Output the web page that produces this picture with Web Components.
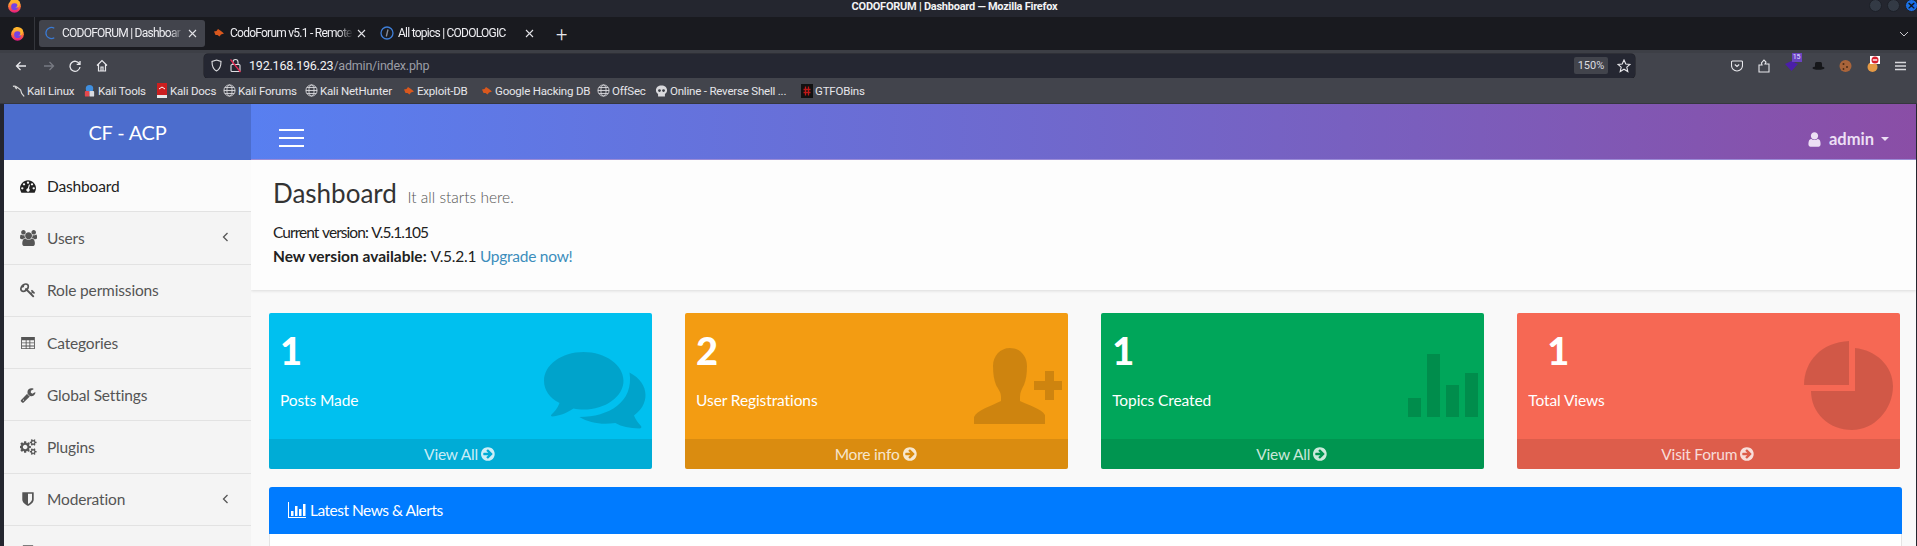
<!DOCTYPE html>
<html>
<head>
<meta charset="utf-8">
<title>CODOFORUM | Dashboard</title>
<style>
  html, body { margin: 0; height: 546px; overflow: hidden; background: #24262f; }
  body { display: flex; flex-direction: column; font-family: "Lato", "Liberation Sans", sans-serif; }
</style>
</head>
<body>
<ff-titlebar></ff-titlebar>
<ff-tabstrip>
  <ff-tab active label="CODOFORUM | Dashboar" icon="spin"></ff-tab>
  <ff-tab label="CodoForum v5.1 - Remote" icon="bug"></ff-tab>
  <ff-tab label="All topics | CODOLOGIC" icon="info"></ff-tab>
</ff-tabstrip>
<ff-toolbar></ff-toolbar>
<ff-bookmarks>
  <ff-bookmark icon="dragon" style="--w:56px">Kali Linux</ff-bookmark>
  <ff-bookmark icon="tools" style="--w:57px">Kali Tools</ff-bookmark>
  <ff-bookmark icon="docs" style="--w:53px">Kali Docs</ff-bookmark>
  <ff-bookmark icon="globe" style="--w:67px">Kali Forums</ff-bookmark>
  <ff-bookmark icon="globe" style="--w:82px">Kali NetHunter</ff-bookmark>
  <ff-bookmark icon="bug" style="--w:63px">Exploit-DB</ff-bookmark>
  <ff-bookmark icon="bug" style="--w:102px">Google Hacking DB</ff-bookmark>
  <ff-bookmark icon="globe" style="--w:43px">OffSec</ff-bookmark>
  <ff-bookmark icon="skull" style="--w:130px">Online - Reverse Shell ...</ff-bookmark>
  <ff-bookmark icon="gtfo" style="--w:60px">GTFOBins</ff-bookmark>
</ff-bookmarks>
<acp-page>
  <acp-sidebar slot="side">
    <acp-nav-item active icon="dashboard">Dashboard</acp-nav-item>
    <acp-nav-item icon="users" more>Users</acp-nav-item>
    <acp-nav-item icon="key">Role permissions</acp-nav-item>
    <acp-nav-item icon="table">Categories</acp-nav-item>
    <acp-nav-item icon="wrench">Global Settings</acp-nav-item>
    <acp-nav-item icon="cogs">Plugins</acp-nav-item>
    <acp-nav-item icon="shield" more>Moderation</acp-nav-item>
    <acp-nav-item icon="page"></acp-nav-item>
  </acp-sidebar>
  <acp-topbar slot="top"></acp-topbar>
  <acp-page-header></acp-page-header>
  <acp-stats>
    <acp-card value="1" label="Posts Made" link="View All" icon="chat" style="--bg:#00c0ef"></acp-card>
    <acp-card value="2" label="User Registrations" link="More info" icon="person" style="--bg:#f39c12"></acp-card>
    <acp-card value="1" label="Topics Created" link="View All" icon="bars" style="--bg:#00a65a"></acp-card>
    <acp-card value="1" label="Total Views" link="Visit Forum" icon="pie" indent style="--bg:#f66854"></acp-card>
  </acp-stats>
  <acp-panel>Latest News &amp; Alerts</acp-panel>
</acp-page>

<script>
// font-awesome 4 glyphs, 1792 box unless WIDE says otherwise
const WIDE = { users: 1920, cogs: 1920 };
const FA = {
  user: 'M1536 1399q0 109-62.500 187t-150.500 78h-854q-88 0-150.500-78t-62.500-187q0-85 8.500-160.500t31.500-152 58.500-131 94-89 134.500-34.500q131 128 313 128t313-128q76 0 134.500 34.500t94 89 58.500 131 31.500 152 8.500 160.500zm-256-887q0 159-112.500 271.500t-271.500 112.500-271.500-112.500-112.500-271.500 112.500-271.500 271.500-112.500 271.500 112.500 112.500 271.500z',
  users: 'M593 896q-162 5-265 128h-134q-82 0-138-40.500t-56-118.500q0-353 124-353 6 0 43.500 21t97.500 42.500 119 21.500q67 0 133-23-5 37-5 66 0 139 81 256zm1071 637q0 120-73 189.500t-194 69.500h-874q-121 0-194-69.500t-73-189.500q0-53 3.500-103.500t14-109 26.500-108.500 43-97.500 62-81 85.500-53.500 111.500-20q10 0 43 21.500t73 48 107 48 135 21.500 135-21.500 107-48 73-48 43-21.500q61 0 111.500 20t85.500 53.500 62 81 43 97.500 26.500 108.500 14 109 3.500 103.500zm-1024-1277q0 106-75 181t-181 75-181-75-75-181 75-181 181-75 181 75 75 181zm704 384q0 159-112.500 271.500t-271.500 112.500-271.500-112.500-112.500-271.500 112.500-271.500 271.500-112.500 271.500 112.500 112.500 271.500zm576 225q0 78-56 118.500t-138 40.500h-134q-103-123-265-128 81-117 81-256 0-29-5-66 66 23 133 23 59 0 119-21.500t97.500-42.500 43.500-21q124 0 124 353zm-128-609q0 106-75 181t-181 75-181-75-75-181 75-181 181-75 181 75 75 181z',
  wrench: 'M448 1472q0-26-19-45t-45-19-45 19-19 45 19 45 45 19 45-19 19-45zm644-420l-682 682q-37 37-90 37-52 0-91-37l-106-108q-38-36-38-90 0-53 38-91l681-681q39 98 114.500 173.500t173.500 114.500zm634-435q0 39-23 106-47 134-164.500 217.500t-258.500 83.500q-185 0-316.500-131.500t-131.500-316.500 131.500-316.500 316.500-131.500q58 0 121.500 16.500t107.500 46.500q16 11 16 28t-16 28l-293 169v224l193 107q5-3 79-48.500t135.500-81 70.500-35.500q15 0 23.500 10t8.500 25z',
  shield: 'M1344 960v-640h-448v1137q119-63 213-137 235-184 235-360zm192-768v768q0 86-33.500 170.500t-83 150-118 127.500-126.500 103-121 77.500-89.500 49.500-42.500 20q-12 6-26 6t-26-6q-16-7-42.500-20t-89.500-49.500-121-77.500-126.500-103-118-127.500-83-150-33.500-170.500v-768q0-26 19-45t45-19h1152q26 0 45 19t19 45z',
  arrow: 'M1285 896q0-27-18-45l-91-91-362-362q-18-18-45-18t-45 18l-91 91q-18 18-18 45t18 45l189 189h-502q-26 0-45 19t-19 45v128q0 26 19 45t45 19h502l-189 189q-19 19-19 45t19 45l91 91q18 18 45 18t45-18l362-362 91-91q18-18 18-45zm251 0q0 209-103 385.500t-279.500 279.500-385.500 103-385.500-103-279.500-279.500-103-385.500 103-385.500 279.500-279.500 385.500-103 385.500 103 279.500 279.500 103 385.500z',
  table: 'M128 224h1536v1344h-1536zM224 576v256h416v-256zM736 576v256h320v-256zM1152 576v256h416v-256zM224 928v256h416v-256zM736 928v256h320v-256zM1152 928v256h416v-256zM224 1280v192h416v-192zM736 1280v192h320v-192zM1152 1280v192h416v-192z',
  key: 'M832 512q0-80-56-136t-136-56-136 56-56 136q0 42 19 83-41-19-83-19-80 0-136 56t-56 136 56 136 136 56 136-56 56-136q0-42-19-83 41 19 83 19 80 0 136-56t56-136zm851 704q0 17-49 66t-66 49q-9 0-28.500-16t-36.500-33-38.500-40-24.500-26l-96 96 220 220q28 28 28 68 0 42-39 81t-81 39q-40 0-68-28l-671-671q-176 131-365 131-163 0-265.500-102.500t-102.500-265.500q0-160 95-313t248-248 313-95q163 0 265.500 102.500t102.500 265.500q0 189-131 365l355 355 96-96q-3-3-26-24.500t-40-38.500-33-36.500-16-28.500q0-17 49-66t66-49q13 0 23 10 6 6 46 44.500t82 79.500 86.500 86 73 78 28.500 41z',
  dashboard: 'M384 1152q0-53-37.500-90.500t-90.500-37.500-90.500 37.500-37.500 90.500 37.500 90.500 90.500 37.500 90.500-37.500 37.500-90.500zm192-448q0-53-37.500-90.500t-90.500-37.500-90.500 37.500-37.500 90.500 37.500 90.500 90.500 37.500 90.500-37.500 37.500-90.500zm428 481l101-382q6-26-7.500-48.500t-38.500-29.500-48 6.500-30 39.500l-101 382q-60 5-107 43.500t-63 98.500q-20 77 20 146t117 89 146-20 89-117q16-60-6-117t-72-91zm660-33q0-53-37.500-90.500t-90.500-37.500-90.500 37.500-37.500 90.500 37.500 90.500 90.500 37.500 90.500-37.500 37.500-90.500zm-640-640q0-53-37.500-90.500t-90.500-37.500-90.500 37.500-37.500 90.500 37.500 90.500 90.500 37.500 90.500-37.500 37.500-90.500zm448 192q0-53-37.500-90.500t-90.500-37.500-90.500 37.500-37.500 90.500 37.500 90.500 90.500 37.500 90.500-37.500 37.500-90.500zm320 448q0 261-141 483-19 29-54 29h-1402q-35 0-54-29-141-221-141-483 0-182 71-348t191-286 286-191 348-71 348 71 286 191 191 286 71 348z',
  cogs: 'M832 896q0-106-75-181t-181-75-181 75-75 181 75 181 181 75 181-75 75-181zm768 512q0-52-38-90t-90-38-90 38-38 90q0 53 37.500 90.500t90.500 37.500 90.500-37.500 37.500-90.500zm0-1024q0-52-38-90t-90-38-90 38-38 90q0 53 37.500 90.500t90.500 37.500 90.500-37.500 37.500-90.500zm-384 421v185q0 10-7 19.500t-16 10.500l-155 24q-11 35-32 76 34 48 90 115 7 11 7 20 0 12-7 19-23 30-82.500 89.500t-78.500 59.500q-11 0-21-7l-115-90q-37 19-77 31-11 108-23 155-7 24-30 24h-186q-11 0-20-7.500t-10-17.500l-23-153q-34-10-75-31l-118 89q-7 7-20 7-11 0-21-8-144-133-144-160 0-9 7-19 10-14 41-53t47-61q-23-44-35-82l-152-24q-10-1-17-9.500t-7-19.500v-185q0-10 7-19.500t16-10.500l155-24q11-35 32-76-34-48-90-115-7-11-7-20 0-12 7-20 22-30 82-89t79-59q11 0 21 7l115 90q34-18 77-32 11-108 23-154 7-24 30-24h186q11 0 20 7.500t10 17.500l23 153q34 10 75 31l118-89q8-7 20-7 11 0 21 8 144 133 144 160 0 8-7 19-12 16-42 54t-45 60q23 48 34 82l152 23q10 2 17 10.500t7 19.500zm640 533v140q0 16-149 31-12 27-30 52 51 113 51 138 0 4-4 7-122 71-124 71-8 0-46-47t-52-68q-20 2-30 2t-30-2q-14 21-52 68t-46 47q-2 0-124-71-4-3-4-7 0-25 51-138-18-25-30-52-149-15-149-31v-140q0-16 149-31 13-29 30-52-51-113-51-138 0-4 4-7 4-2 35-20t59-34 30-16q8 0 46 46.500t52 67.500q20-2 30-2t30 2q51-71 92-112l6-2q4 0 124 70 4 3 4 7 0 25-51 138 17 23 30 52 149 15 149 31zm0-1024v140q0 16-149 31-12 27-30 52 51 113 51 138 0 4-4 7-122 71-124 71-8 0-46-47t-52-68q-20 2-30 2t-30-2q-14 21-52 68t-46 47q-2 0-124-71-4-3-4-7 0-25 51-138-18-25-30-52-149-15-149-31v-140q0-16 149-31 13-29 30-52-51-113-51-138 0-4 4-7 4-2 35-20t59-34 30-16q8 0 46 46.500t52 67.500q20-2 30-2t30 2q51-71 92-112l6-2q4 0 124 70 4 3 4 7 0 25-51 138 17 23 30 52 149 15 149 31z',
  page: 'M320 128h1152v1536h-1152zM448 256v1280h896v-1280z'
};

function fa(name, size, rule = 'evenodd') {
  const w = WIDE[name] || 1792;
  return `<svg width="${size * w / 1792}" height="${size}" viewBox="0 0 ${w} 1792" fill="currentColor" fill-rule="${rule}"><path d="${FA[name]}"/></svg>`;
}

const FOX = `<svg width="15" height="15" viewBox="0 0 20 20"><defs><linearGradient id="f" x1="0" y1="0" x2="0" y2="1"><stop offset="0" stop-color="#ffd23a"/><stop offset=".55" stop-color="#ff7139"/><stop offset="1" stop-color="#e31587"/></linearGradient></defs><circle cx="10" cy="11" r="8.500" fill="url(#f)"/><circle cx="10" cy="11.500" r="4.500" fill="#7542e5"/><path d="M4 4c2 3 7 1 9 3 2 2 1 5-2 6 5 0 7-4 6-8-3-4-9-5-13-1z" fill="#ffb32c"/></svg>`;

const FAVICONS = {
  spin: `<svg width="13" height="14" viewBox="0 0 14 14" fill="none"><path d="M10 1.800A6 6 0 1 0 10 12.200" stroke="#3a7bd5" stroke-width="1.300"/></svg>`,
  info: `<svg width="14" height="14" viewBox="0 0 14 14" fill="none"><circle cx="7" cy="7" r="6" stroke="#3f7fd8" stroke-width="1.300"/><path d="M8 3.500 6.300 10.500" stroke="#8a8f99" stroke-width="1.300"/></svg>`,
  bug: `<svg width="12" height="12" viewBox="0 0 12 12"><path d="M1 4.500 3.500 4 5 2l3 2 3 2.500-3 1-1.500 2L4.500 8 2.500 8z" fill="#d9581e"/></svg>`,
  globe: `<svg width="13" height="13" viewBox="0 0 14 14" fill="none" stroke="#d6d6da" stroke-width="1"><circle cx="7" cy="7" r="6"/><ellipse cx="7" cy="7" rx="2.800" ry="6"/><path d="M1 7h12M2 3.800h10M2 10.200h10"/></svg>`,
  dragon: `<svg width="13" height="14" viewBox="0 0 14 14" fill="none" stroke="#d8d8d8" stroke-width="1.300"><path d="M1 2c3-1 4 1 6 2s3 2 3 4 2 3 3 5M3 2l2 3"/></svg>`,
  tools: `<svg width="13" height="14" viewBox="0 0 14 14"><circle cx="7" cy="4.500" r="4" fill="#3f8fe0"/><rect x="2" y="7" width="5" height="6" rx="1" fill="#e5484d"/><rect x="7" y="7" width="5" height="6" rx="1" fill="#d9dbe0"/></svg>`,
  docs: `<svg width="10" height="15" viewBox="0 0 10 15"><rect width="10" height="14" fill="#cc1f1f"/><rect y="12" width="10" height="3" fill="#e8e8e8"/><path d="M2 6l3-2 3 2" stroke="#fff" fill="none"/></svg>`,
  skull: `<svg width="13" height="14" viewBox="0 0 14 14"><path d="M7 1c3.500 0 6 2.200 6 5.200 0 2-1 3.300-2.300 4V13H3.300v-2.800C2 9.500 1 8.200 1 6.200 1 3.200 3.500 1 7 1z" fill="#d9d9dc"/><circle cx="4.800" cy="6.500" r="1.500" fill="#3b3e45"/><circle cx="9.200" cy="6.500" r="1.500" fill="#3b3e45"/></svg>`,
  gtfo: `<svg width="12" height="14" viewBox="0 0 12 14"><rect width="12" height="14" fill="#111"/><path d="M4.500 2.500v9M7.500 2.500v9M2.500 5.500h7M2.500 8.500h7" stroke="#c01818" stroke-width="1.300"/></svg>`
};

function define(name, markup, init) {
  customElements.define(name, class extends HTMLElement {
    constructor() {
      super();
      this.attachShadow({ mode: "open" });
    }
    connectedCallback() {
      this.shadowRoot.innerHTML = typeof markup === "function" ? markup(this) : markup;
      if (init) init(this);
    }
  });
}

define("ff-titlebar", `
  <style>
    :host { display: flex; height: 17px; flex: none; background: #24262f; position: relative; justify-content: center; color: #f2f2f4; font: 700 11px/11px "Roboto", sans-serif; }
    .fox { position: absolute; left: 7px; top: -2px; }
    .title { padding-top: 1px; margin-left: -8px; letter-spacing: -.25px; }
    .btns { position: absolute; right: 0; top: -1px; display: flex; gap: 5px; }
    .btns i { width: 13px; height: 13px; border-radius: 50%; background: #333a45; border: 1px solid #1d2028; box-sizing: border-box; }
    .btns i:last-child { background: #1c6fe8; margin-right: -1px; color: #0e1116; font: 700 11px/11px "DejaVu Sans", sans-serif; text-align: center; font-style: normal; }
  </style>
  <span class="fox">${FOX}</span>
  <span class="title">CODOFORUM | Dashboard — Mozilla Firefox</span>
  <span class="btns"><i></i><i></i><i>×</i></span>`);

define("ff-tabstrip", `
  <style>
    :host { display: flex; align-items: center; height: 33px; flex: none; background: #191a1f; border-bottom: 3px solid #3d3f46; color: #f0f0f4; }
    .fox { width: 35px; height: 100%; display: flex; align-items: center; justify-content: center; border-right: 1px solid #34363c; box-sizing: border-box; flex: none; margin-right: 4px; }
    .plus { font: 300 20px/20px "Roboto", sans-serif; margin-left: 13px; color: #e8e8ec; }
    .chev { margin-left: auto; margin-right: 8px; }
  </style>
  <span class="fox">${FOX}</span>
  <slot></slot>
  <span class="plus">+</span>
  <svg class="chev" width="10" height="6" viewBox="0 0 10 6" fill="none" stroke="#c8c8cc"><path d="M1 1l4 4 4-4"/></svg>`);

define("ff-tab", (el) => `
  <style>
    :host { display: flex; align-items: center; width: 168px; height: 27px; box-sizing: border-box; padding: 0 9px 0 5px; border-radius: 3px; flex: none; font: 400 12px/27px "Roboto", sans-serif; color: #eeeef2; margin-top: -1px; }
    :host([active]) { width: 166px; background: #42444c; margin-right: 2px; padding-right: 8px; }
    .ic { width: 14px; margin-right: 4px; display: flex; justify-content: center; flex: none; }
    .txt { flex: 1; min-width: 0; overflow: hidden; white-space: nowrap; -webkit-mask-image: linear-gradient(to right, #000 88%, transparent); mask-image: linear-gradient(to right, #000 88%, transparent); letter-spacing: -.75px; }
    .x { flex: none; margin-left: 4px; display: flex; }
  </style>
  <span class="ic">${FAVICONS[el.getAttribute("icon")]}</span>
  <span class="txt">${el.getAttribute("label")}</span>
  <svg class="x" width="9" height="9" viewBox="0 0 9 9" stroke="#e2e2e6" stroke-width="1.100"><path d="M1 1l7 7M8 1l-7 7"/></svg>`);

define("ff-toolbar", `
  <style>
    :host { display: flex; align-items: center; height: 25px; flex: none; background: #42444c; color: #e8e8ec; }
    .nav { display: flex; align-items: center; width: 204px; flex: none; }
    .nav svg { flex: none; }
    .url { width: 1431px; height: 24px; box-sizing: border-box; background: #252732; border-radius: 4px; display: flex; align-items: center; flex: none; padding-left: 7px; box-shadow: 0 0 0 .5px #1c1d23; }
    .addr { margin-left: 7px; font: 400 12.500px/24px "Roboto", sans-serif; color: #f2f2f5; letter-spacing: -.2px; }
    .addr span { color: #9c9ea6; }
    .zoom { margin-left: auto; width: 34px; height: 17px; border-radius: 2px; background: #42444c; font: 400 11px/17px "Roboto", sans-serif; text-align: center; color: #dcdce0; }
    .star { margin: 0 4px 0 9px; }
    .tools { display: flex; flex: 1; align-items: center; padding-left: 88px; }
    .tools > * { width: 27.300px; flex: none; display: flex; justify-content: center; position: relative; }
    .badge { position: absolute; top: -8px; left: 14px; width: 10px; height: 9px; background: #6a43c0; color: #e8e0ff; font: 400 7px/9px "Roboto", sans-serif; text-align: center; }
  </style>
  <div class="nav">
    <svg style="margin-left:15px" width="12" height="12" viewBox="0 0 12 12" fill="none" stroke="#e8e8ec" stroke-width="1.300"><path d="M11 6H1.500M5.500 2 1.500 6l4 4"/></svg>
    <svg style="margin-left:16px" width="12" height="12" viewBox="0 0 12 12" fill="none" stroke="#777a82" stroke-width="1.300"><path d="M1 6h9.500M6.500 2l4 4-4 4"/></svg>
    <svg style="margin-left:14px" width="12" height="12" viewBox="0 0 12 12" fill="none" stroke="#e8e8ec" stroke-width="1.300"><path d="M10.500 4A5 5 0 1 0 11 7M11 1v3.300H7.700"/></svg>
    <svg style="margin-left:15px" width="12" height="13" viewBox="0 0 12 13" fill="none" stroke="#e8e8ec" stroke-width="1.200"><path d="M1 6.500 6 1.500l5 5M2.500 5.500V12h7V5.500M5 12V8h2v4"/></svg>
  </div>
  <div class="url">
    <svg width="11" height="13" viewBox="0 0 11 13" fill="none" stroke="#dedee2" stroke-width="1.100"><path d="M5.500 1 10 2.500c0 5-1.500 8-4.500 9.500C2.500 10.500 1 7.500 1 2.500z"/></svg>
    <svg style="margin-left:7px" width="13" height="15" viewBox="0 0 13 15" fill="none" stroke="#dedee2" stroke-width="1.100"><rect x="2" y="6.500" width="9" height="7" rx="1"/><path d="M4 6.500V4a2.500 2.500 0 0 1 5 0v2.500"/><path d="M1.500 1.500 11.500 14" stroke="#e22850" stroke-width="1.300"/></svg>
    <span class="addr">192.168.196.23<span>/admin/index.php</span></span>
    <span class="zoom">150%</span>
    <svg class="star" width="14" height="14" viewBox="0 0 14 14" fill="none" stroke="#e8e8ec" stroke-width="1.100"><path d="M7 1l1.800 4 4.200.4-3.200 2.800 1 4.300L7 10.200 3.200 12.500l1-4.300L1 5.400 5.200 5z"/></svg>
  </div>
  <div class="tools">
    <span><svg width="12" height="12" viewBox="0 0 12 12" fill="none" stroke="#e8e8ec" stroke-width="1.100"><path d="M1.500 1h9a1 1 0 0 1 1 1v3.500a5.500 5.500 0 0 1-11 0V2a1 1 0 0 1 1-1z"/><path d="M3.800 4.500 6 6.500l2.200-2"/></svg></span>
    <span><svg width="12" height="14" viewBox="0 0 12 14" fill="none" stroke="#e8e8ec" stroke-width="1.100"><path d="M1 13V6h3L3.500 4 6 1l2 2-1 2h4v8z"/></svg></span>
    <span><svg width="13" height="10" viewBox="0 0 13 10"><path d="M0 3l6.500-3L13 3 6.500 10z" fill="#4b1fa8"/></svg><i class="badge" style="font-style:normal">15</i></span>
    <span><svg width="13" height="8" viewBox="0 0 13 8"><ellipse cx="6.500" cy="6" rx="6" ry="1.800" fill="#16171a"/><rect x="3" y="0" width="7" height="6" rx="1.500" fill="#16171a"/></svg></span>
    <span><svg width="13" height="14" viewBox="0 0 13 14"><circle cx="6.500" cy="7" r="6" fill="#a9643a"/><circle cx="4.500" cy="5" r="1" fill="#4c2b15"/><circle cx="8" cy="8" r="1" fill="#4c2b15"/><circle cx="4.500" cy="10" r=".9" fill="#4c2b15"/></svg></span>
    <span><svg width="13" height="17" viewBox="0 0 13 17" style="margin-top:-3px"><circle cx="5.500" cy="11" r="5" fill="#e59a45"/><rect x="3" y="0" width="10" height="8" fill="#fff"/><circle cx="8" cy="4" r="3.500" fill="#d8202f"/><rect x="5.800" y="3.300" width="4.400" height="1.400" fill="#fff"/></svg></span>
    <span><svg width="11" height="10" viewBox="0 0 11 10" stroke="#d8d8dc" stroke-width="1.300"><path d="M0 1.500h11M0 5h11M0 8.500h11"/></svg></span>
  </div>`);

define("ff-bookmarks", `
  <style>
    :host { display: flex; align-items: center; height: 26px; flex: none; background: #42444c; border-bottom: 1px solid #35373e; box-sizing: border-box; padding: 0 0 0 12px; }
  </style>
  <slot></slot>`);

define("ff-bookmark", (el) => `
  <style>
    :host { display: flex; align-items: center; gap: 2px; flex: none; color: #e6e6ea; font: 400 11.500px/16px "Roboto", sans-serif; }
    .t { width: var(--w); white-space: nowrap; letter-spacing: -.2px; }
    .i { display: flex; width: 13px; justify-content: center; }
  </style>
  <span class="i">${FAVICONS[el.getAttribute("icon")]}</span><span class="t"><slot></slot></span>`);

define("acp-page", `
  <style>
    :host { flex: 1; min-height: 0; display: grid; grid-template-columns: 247px 1fr; grid-template-rows: 56px 1fr; margin: 0 1px 0 4px; background: #f9f9f9; overflow: hidden; }
    .logo { background: #4c6dcd; color: #fff; font-size: 20px; font-weight: 400; display: flex; align-items: center; justify-content: center; padding-bottom: 1px; letter-spacing: -.2px; box-sizing: border-box; }
    .side { grid-row: 2; grid-column: 1; min-height: 0; overflow: hidden; }
    .top { grid-row: 1; grid-column: 2; }
    .main { grid-row: 2; grid-column: 2; min-height: 0; display: flex; flex-direction: column; overflow: hidden; }
  </style>
  <div class="logo">CF - ACP</div>
  <div class="top"><slot name="top"></slot></div>
  <div class="side"><slot name="side"></slot></div>
  <div class="main"><slot></slot></div>`);

define("acp-topbar", `
  <style>
    :host { display: flex; align-items: center; height: 56px; background: linear-gradient(to right, #587ff0 0%, #7a5ebd 70%, #8a4ea6 100%); color: #fff; box-sizing: border-box; border-bottom: 1px solid #9b8bd6; }
    .burger { display: flex; flex-direction: column; gap: 6px; margin: 13px 0 0 28px; }
    .burger i { display: block; width: 25px; height: 2px; background: #fff; }
    .me { margin: 15px 27px 0 auto; display: flex; align-items: center; gap: 7px; color: #ecdff4; font-size: 16.500px; font-weight: 700; }
    .me svg { margin-right: -1px; }
    .caret { width: 0; height: 0; border: 4.500px solid transparent; border-top-color: #ecdff4; border-bottom: 0; }
  </style>
  <div class="burger"><i></i><i></i><i></i></div>
  <div class="me">${fa("user", 17)}<span>admin</span><span class="caret"></span></div>`);

define("acp-sidebar", `
  <style>:host { display: block; background: #f4f4f4; }</style>
  <slot></slot>`);

define("acp-nav-item", (el) => `
  <style>
    :host { display: flex; align-items: center; height: 52.300px; box-sizing: border-box; padding-left: 16px; color: #555; font-size: 15.500px; letter-spacing: -.15px; border-bottom: 1px solid #e2e2e2; position: relative; }
    :host([active]) { background: #fbfbfb; color: #222; }
    .ic { width: 27px; display: flex; flex: none; }
    .chev { position: absolute; left: 218px; top: 20px; }
  </style>
  <span class="ic">${fa(el.getAttribute("icon"), 16)}</span><slot></slot>
  ${el.hasAttribute("more") ? `<svg class="chev" width="7" height="10" viewBox="0 0 7 10" fill="none" stroke="#555" stroke-width="1.300"><path d="M5.500 1 1.500 5l4 4"/></svg>` : ""}`);

define("acp-page-header", `
  <style>
    :host { display: block; height: 130px; flex: none; box-sizing: border-box; background: #fdfdfd; padding: 17px 0 0 22px; color: #222; box-shadow: 0 1px 3px rgba(0,0,0,.12); }
    h1 { margin: 0 0 7px; font-size: 26px; line-height: 32px; font-weight: 400; color: #333; }
    small { font-size: 15.500px; font-weight: 300; color: #555; margin-left: 4px; letter-spacing: 0; }
    p { margin: 0; font-size: 15.500px; line-height: 24px; }
    .cur { letter-spacing: -.95px; word-spacing: 1px; }
    .reg { letter-spacing: -.25px; }
    a { color: #3c8dbc; }
  </style>
  <h1>Dashboard <small>It all starts here.</small></h1>
  <p class="cur">Current version: V.5.1.105</p>
  <p><b>New version available:</b> <span class="reg">V.5.2.1 <a>Upgrade now!</a></span></p>`);

define("acp-stats", `
  <style>
    :host { display: grid; grid-template-columns: repeat(4, 383px); column-gap: 33.100px; padding: 23px 0 0 18px; flex: none; }
  </style>
  <slot></slot>`);

const CARD_ICONS = {
  chat: `<svg width="102" height="79" viewBox="0 0 102 79" style="right:6px;top:39px"><path d="M39.500 0C61.500 0 79.500 12.800 79.500 28.700 79.500 44.600 61.500 57.500 39.500 57.500c-3.500 0-7-.3-10-1-5 3.500-12 7-21 8-1.500 0-2-1-1-2 3-3 6-6 8-11.500C5.500 46 0 38 0 28.700 0 12.800 17.500 0 39.500 0z"/><path d="M85.500 20.500C96 26 101.500 34 101.500 43c0 8-4 15-11.500 20.500 1.500 4 4 7 7 10.500 1 1.500 0 2.500-1.500 2.500C85 76 78 75 71.300 71 58 73 45 71 35.300 65 65 65 90 50 85.500 20.500z"/></svg>`,
  person: `<svg width="88" height="76" viewBox="0 0 88 76" style="right:6px;top:35px"><path d="M36 0c10 0 17 8 17 18 0 8-1 14-3 19-2 4-4 7-4 12v4c8 4 22 8 25 14v9H0v-7c3-7 17-11 27-16v-4c0-5-3-8-5-12-2-5-3-11-3-19C19 8 26 0 36 0z"/><path d="M71 23h9v10h8v9h-8v10h-9V42H60v-9h11z"/></svg>`,
  bars: `<svg width="70" height="63" viewBox="0 0 70 63" style="right:6px;top:41px"><rect y="44" width="13" height="19"/><rect x="19" width="13" height="63"/><rect x="38" y="31" width="13" height="32"/><rect x="57" y="19" width="13" height="44"/></svg>`,
  pie: `<svg width="89" height="89" viewBox="0 0 89 89" style="right:7px;top:28px"><path d="M45 0v44H0C0 20 18 1 45 0z"/><path d="M51 7c21 2 38 18 38 38 0 24-19 44-41 44-23 0-41-17-41-39h44z"/></svg>`
};

define("acp-card", (el) => `
  <style>
    :host { display: block; position: relative; height: 156px; border-radius: 2px; background: var(--bg); color: #fff; overflow: hidden; }
    .body { height: 126px; box-sizing: border-box; padding: 15px 12px 0 11px; }
    .num { font-size: 38px; line-height: 44px; font-weight: 900; ${el.hasAttribute("indent") ? "padding-left: 19px;" : ""} }
    .lab { margin-top: 18px; font-size: 15.500px; line-height: 20px; letter-spacing: -.1px; }
    .ic { position: absolute; inset: 0; color: rgba(0,0,0,.15); pointer-events: none; }
    .ic svg { position: absolute; fill: currentColor; }
    .foot { height: 30px; background: rgba(0,0,0,.1); display: flex; align-items: center; justify-content: center; gap: 3px; color: rgba(255,255,255,.8); font-size: 15.500px; letter-spacing: -.2px; }
  </style>
  <div class="body">
    <div class="num">${el.getAttribute("value")}</div>
    <div class="lab">${el.getAttribute("label")}</div>
  </div>
  <div class="foot">${el.getAttribute("link")} ${fa("arrow", 16)}</div>
  <div class="ic">${CARD_ICONS[el.getAttribute("icon")]}</div>`);

define("acp-panel", `
  <style>
    :host { display: block; margin: 18px 14px 0 18px; flex: 1; background: #fff; border: 1px solid #e4e4e4; border-top: 0; border-bottom: 0; border-radius: 3px 3px 0 0; }
    .head { height: 47px; box-sizing: border-box; padding: 0 0 2px 19px; margin: 0 -1px; background: #007bff; color: #fff; border-radius: 3px 3px 0 0; display: flex; align-items: center; gap: 4px; font-size: 15.500px; letter-spacing: -.5px; }
  </style>
  <div class="head">
    <svg width="18" height="16" viewBox="0 0 18 16" fill="currentColor"><path d="M0 0h1v15h17v1H0z"/><rect x="3" y="9" width="2.500" height="5"/><rect x="7" y="4" width="2.500" height="10"/><rect x="11" y="7" width="2.500" height="7"/><rect x="15" y="2" width="2.500" height="12"/></svg>
    <span><slot></slot></span>
  </div>`);
</script>
</body>
</html>
